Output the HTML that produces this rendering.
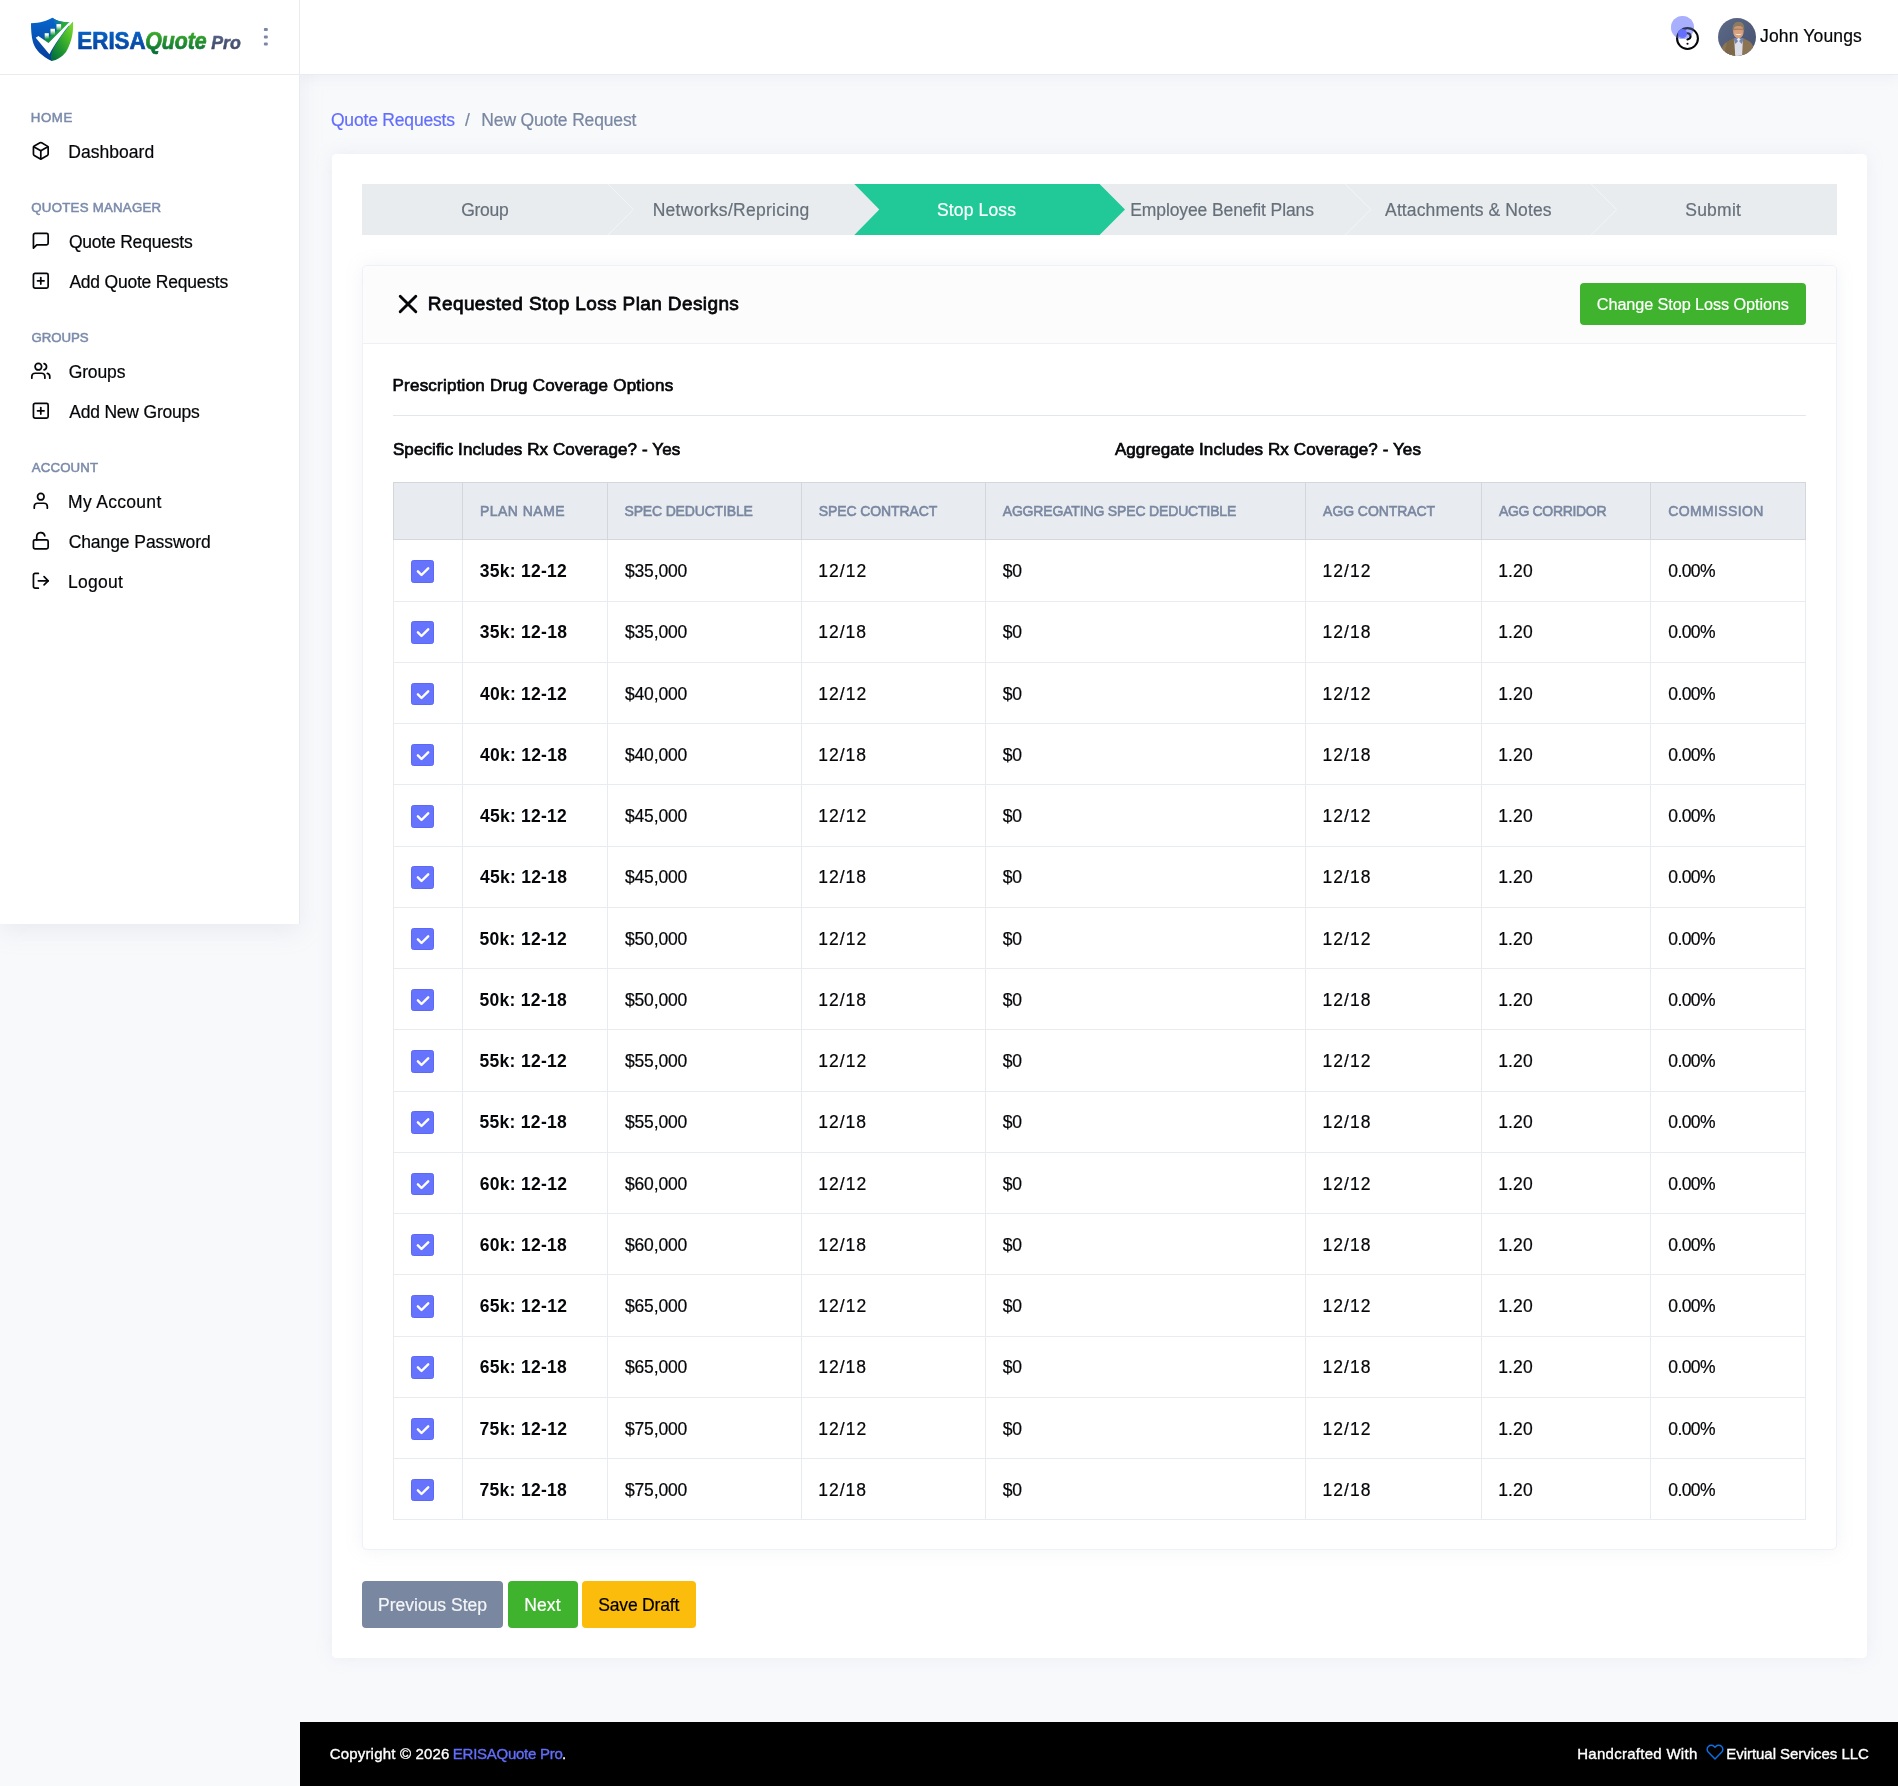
<!DOCTYPE html>
<html lang="en"><head><meta charset="utf-8"><title>ERISAQuote Pro - New Quote Request</title>
<style>
*{box-sizing:border-box}
html,body{margin:0;padding:0}
body{width:1898px;height:1786px;overflow:hidden;background:#f8f9fb;font-family:"Liberation Sans", sans-serif;color:#050609;position:relative}
#app{position:absolute;left:0;top:0;width:1898px;height:1786px;will-change:transform}
.abs,.t,.ic,.ln{position:absolute}
.t{white-space:pre;line-height:1;font-weight:400;-webkit-text-stroke:0.2px currentColor}
.t.b{font-weight:700}
.ic{overflow:visible}
.sidebar{left:0;top:0;width:300px;height:924px;background:#fff;border-right:1px solid #e8ebf1;box-shadow:0 8px 22px rgba(164,172,194,.17)}
.topbar{left:300px;top:0;width:1598px;height:75px;background:#fff;border-bottom:1px solid #e8ebf1;box-shadow:0 4px 12px rgba(176,184,204,.13);clip-path:inset(0 0 -40px 0)}
.logoline{left:0;top:74px;width:299px;height:1px;background:#e8ebf1}
.card{left:332px;top:154px;width:1535px;height:1504px;background:#fff;border-radius:4.5px;box-shadow:0 0 18px rgba(154,163,190,.14)}
.wiz{left:362px;top:184px;width:1475px;height:51px;background:#e9ecef;overflow:hidden}
.inner{left:362px;top:265px;width:1475px;height:1285px;background:#fff;border:1px solid #eff1f6;border-radius:5px;box-shadow:0 0 18px rgba(154,163,190,.13)}
.ihead{left:363px;top:266px;width:1473px;height:78px;background:#fcfcfd;border-bottom:1px solid #eef0f5;border-radius:4px 4px 0 0}
.hr{left:393px;top:415px;width:1413px;height:1px;background:#e3e6ec}
.btn{border-radius:4px}
.thead{left:393px;top:482px;width:1413px;height:58px;background:#e8ebef;border:1px solid #d3d6db}
.ln{background:#e8ecf1}
.ln.h{background:#d3d6db}
.cb{width:23px;height:23px;border-radius:2.5px;background:#6673fd;border:1px solid #5c68fa}
.footer{left:300px;top:1722px;width:1598px;height:64px;background:#000}
</style></head>
<body>
<div id="app">
<aside>
<div class="abs sidebar"></div>
<div class="abs logoline"></div>
<svg class="ic" style="left:0;top:0" width="300" height="74" viewBox="0 0 300 74">
<defs>
<linearGradient id="gb" x1="0" y1="0" x2="0" y2="1"><stop offset="0" stop-color="#0766cc"/><stop offset="1" stop-color="#063c9c"/></linearGradient>
<linearGradient id="gl" x1="0.9" y1="0.1" x2="0.2" y2="1"><stop offset="0" stop-color="#72d62a"/><stop offset="0.55" stop-color="#2aa22e"/><stop offset="1" stop-color="#05703c"/></linearGradient>
<linearGradient id="gv" x1="0" y1="0" x2="1" y2="0"><stop offset="0" stop-color="#0d8a44"/><stop offset="1" stop-color="#2fb23a"/></linearGradient>
<linearGradient id="gt" x1="0" y1="0" x2="1" y2="0"><stop offset="0" stop-color="#0766cc" stop-opacity="1"/><stop offset="1" stop-color="#25a845"/></linearGradient>
<linearGradient id="gw" x1="0" y1="0" x2="0" y2="1"><stop offset="0" stop-color="#fff"/><stop offset="0.25" stop-color="#fff"/><stop offset="1" stop-color="#fff" stop-opacity="0"/></linearGradient>
<linearGradient id="te" x1="0" y1="0" x2="0" y2="1"><stop offset="0" stop-color="#0868cc"/><stop offset="1" stop-color="#073a94"/></linearGradient>
<linearGradient id="tq" x1="0" y1="0" x2="0" y2="1"><stop offset="0" stop-color="#45b828"/><stop offset="1" stop-color="#046a38"/></linearGradient>
<linearGradient id="tp" x1="0" y1="0" x2="0" y2="1"><stop offset="0" stop-color="#5a668a"/><stop offset="1" stop-color="#39425f"/></linearGradient>
</defs>
<path d="M52.3 17.7C47.5 20.6 40 22.9 31 23.2C31 29 31.3 36 33 42.2C35.5 50.5 42 56 51.7 61C60 52 66 40 70 22.6C62 22.6 56.5 20.6 52.3 17.7Z" fill="url(#gb)"/>
<path d="M52.3 17.7C56.5 20.6 62 22.6 69.5 22.6L60 34L52.3 17.7Z" fill="url(#gt)"/>
<path d="M44.7 40.4V33.2H48.8V36.5H50.5V28.8H55V31.5H56.5V24.1H61.1V21.4L69 22.4L48.5 43.1Z" fill="url(#gv)"/>
<rect x="44.7" y="33.2" width="4.1" height="6" fill="url(#gw)"/>
<rect x="50.5" y="28.8" width="4.5" height="6.5" fill="url(#gw)"/>
<rect x="56.5" y="24.1" width="4.6" height="6.5" fill="url(#gw)"/>
<path d="M72.9 21.4C73.6 30 72.6 40 66 52C62 57 57 60 51.7 61C51 58.5 50.8 56.5 51.1 54.3C53 48 59 37.5 72.9 21.4Z" fill="url(#gl)"/>
<path d="M35.7 37.7L38.4 35.9L48.5 43.1L68.9 22.4L72.7 21.3C62 33 54.5 45 49.4 54.2Z" fill="#fff"/>
<text x="77.3" y="49.3" font-family="Liberation Sans, sans-serif" font-weight="700" font-size="23.2" fill="url(#te)" stroke="url(#te)" stroke-width="0.7" textLength="68.4" lengthAdjust="spacingAndGlyphs">ERISA</text>
<text x="145.2" y="49.3" font-family="Liberation Sans, sans-serif" font-weight="700" font-style="italic" font-size="23.6" fill="url(#tq)" stroke="url(#tq)" stroke-width="0.7" textLength="61.5" lengthAdjust="spacingAndGlyphs">Quote</text>
<text x="211.2" y="49.3" font-family="Liberation Sans, sans-serif" font-weight="700" font-style="italic" font-size="18.8" fill="url(#tp)" stroke="url(#tp)" stroke-width="0.5" textLength="29.6" lengthAdjust="spacingAndGlyphs">Pro</text>
<g fill="#7b87a6"><rect x="263.9" y="27.9" width="3.9" height="3" rx="1"/><rect x="263.9" y="35.6" width="3.9" height="3" rx="1"/><rect x="263.9" y="42.6" width="3.9" height="3" rx="1"/></g>
</svg>
<svg class="ic" style="left:31.2px;top:141.2px" width="19.6" height="19.6" viewBox="0 0 24 24" fill="none" stroke="#050609" stroke-width="2.1" stroke-linecap="round" stroke-linejoin="round"><path d="M21 16V8a2 2 0 0 0-1-1.73l-7-4a2 2 0 0 0-2 0l-7 4A2 2 0 0 0 3 8v8a2 2 0 0 0 1 1.73l7 4a2 2 0 0 0 2 0l7-4A2 2 0 0 0 21 16z"/><polyline points="3.27 6.96 12 12.01 20.73 6.96"/><line x1="12" y1="22.08" x2="12" y2="12"/></svg>
<svg class="ic" style="left:31.2px;top:231px" width="19.6" height="19.6" viewBox="0 0 24 24" fill="none" stroke="#050609" stroke-width="2.1" stroke-linecap="round" stroke-linejoin="round"><path d="M21 15a2 2 0 0 1-2 2H7l-4 4V5a2 2 0 0 1 2-2h14a2 2 0 0 1 2 2z"/></svg>
<svg class="ic" style="left:31.2px;top:271.4px" width="19.6" height="19.6" viewBox="0 0 24 24" fill="none" stroke="#050609" stroke-width="2.1" stroke-linecap="round" stroke-linejoin="round"><rect x="3" y="3" width="18" height="18" rx="2" ry="2"/><line x1="12" y1="8" x2="12" y2="16"/><line x1="8" y1="12" x2="16" y2="12"/></svg>
<svg class="ic" style="left:31.2px;top:361px" width="19.6" height="19.6" viewBox="0 0 24 24" fill="none" stroke="#050609" stroke-width="2.1" stroke-linecap="round" stroke-linejoin="round"><path d="M17 21v-2a4 4 0 0 0-4-4H5a4 4 0 0 0-4 4v2"/><circle cx="9" cy="7" r="4"/><path d="M23 21v-2a4 4 0 0 0-3-3.87"/><path d="M16 3.13a4 4 0 0 1 0 7.75"/></svg>
<svg class="ic" style="left:31.2px;top:401.2px" width="19.6" height="19.6" viewBox="0 0 24 24" fill="none" stroke="#050609" stroke-width="2.1" stroke-linecap="round" stroke-linejoin="round"><rect x="3" y="3" width="18" height="18" rx="2" ry="2"/><line x1="12" y1="8" x2="12" y2="16"/><line x1="8" y1="12" x2="16" y2="12"/></svg>
<svg class="ic" style="left:31.2px;top:491.2px" width="19.6" height="19.6" viewBox="0 0 24 24" fill="none" stroke="#050609" stroke-width="2.1" stroke-linecap="round" stroke-linejoin="round"><path d="M20 21v-2a4 4 0 0 0-4-4H8a4 4 0 0 0-4 4v2"/><circle cx="12" cy="7" r="4"/></svg>
<svg class="ic" style="left:31.2px;top:531.2px" width="19.6" height="19.6" viewBox="0 0 24 24" fill="none" stroke="#050609" stroke-width="2.1" stroke-linecap="round" stroke-linejoin="round"><rect x="3" y="11" width="18" height="11" rx="2" ry="2"/><path d="M7 11V7a5 5 0 0 1 9.9-1"/></svg>
<svg class="ic" style="left:31.2px;top:571.2px" width="19.6" height="19.6" viewBox="0 0 24 24" fill="none" stroke="#050609" stroke-width="2.1" stroke-linecap="round" stroke-linejoin="round"><path d="M9 21H5a2 2 0 0 1-2-2V5a2 2 0 0 1 2-2h4"/><polyline points="16 17 21 12 16 7"/><line x1="21" y1="12" x2="9" y2="12"/></svg>
<span class="t" style="left:30.77px;top:111px;font-size:13.25px;-webkit-text-stroke-width:0.53px;letter-spacing:0.61px;color:#7b8bab;">HOME</span>
<span class="t" style="left:31.27px;top:201px;font-size:13.25px;-webkit-text-stroke-width:0.53px;letter-spacing:0.25px;color:#7b8bab;">QUOTES MANAGER</span>
<span class="t" style="left:31.45px;top:331px;font-size:13.25px;-webkit-text-stroke-width:0.53px;letter-spacing:-0.04px;color:#7b8bab;">GROUPS</span>
<span class="t" style="left:31.7px;top:461px;font-size:13.25px;-webkit-text-stroke-width:0.53px;letter-spacing:0.16px;color:#7b8bab;">ACCOUNT</span>
<span class="t" style="left:68.24px;top:144px;font-size:17.5px;letter-spacing:0.04px;">Dashboard</span>
<span class="t" style="left:68.91px;top:234px;font-size:17.5px;letter-spacing:-0.21px;">Quote Requests</span>
<span class="t" style="left:69.41px;top:274px;font-size:17.5px;letter-spacing:-0.22px;">Add Quote Requests</span>
<span class="t" style="left:68.69px;top:364px;font-size:17.5px;letter-spacing:-0.14px;">Groups</span>
<span class="t" style="left:69.21px;top:404px;font-size:17.5px;letter-spacing:-0.2px;">Add New Groups</span>
<span class="t" style="left:68.04px;top:494px;font-size:17.5px;letter-spacing:0.31px;">My Account</span>
<span class="t" style="left:68.65px;top:534px;font-size:17.5px;letter-spacing:-0.07px;">Change Password</span>
<span class="t" style="left:68.04px;top:574px;font-size:17.5px;letter-spacing:0.26px;">Logout</span>
</aside>
<header>
<div class="abs topbar"></div>
<div class="abs" style="left:1671.2px;top:15.8px;width:22.8px;height:22.8px;border-radius:50%;background:rgba(112,122,252,.55)"></div>
<svg class="ic" style="left:1675px;top:25.8px" width="25" height="25" viewBox="0 0 24 24" fill="none" stroke="#050609" stroke-width="2" stroke-linecap="round" stroke-linejoin="round"><circle cx="12" cy="12" r="10"/><path d="M9.09 9a3 3 0 0 1 5.83 1c0 2-3 3-3 3"/><line x1="12" y1="17" x2="12.01" y2="17"/></svg>
<div class="abs" style="left:1671.2px;top:15.8px;width:22.8px;height:22.8px;border-radius:50%;background:rgba(150,158,255,.3)"></div>
<div class="abs" style="left:1677.9px;top:28.9px;width:9px;height:9px;border-radius:50%;background:#6470fb"></div>
<svg class="ic" style="left:1718px;top:18px" width="38" height="38" viewBox="0 0 38 38">
<defs><clipPath id="av"><circle cx="19" cy="19" r="19"/></clipPath>
<linearGradient id="avb" x1="0" y1="0" x2="1" y2="1"><stop offset="0" stop-color="#5d6a88"/><stop offset="1" stop-color="#45516d"/></linearGradient></defs>
<g clip-path="url(#av)">
<rect width="38" height="38" fill="url(#avb)"/>
<path d="M2 38C3.5 29 5.5 25.5 9 24L15.5 20.5L20.5 23L26 20.5L31.5 23.5C34.5 25.5 36 29 37 38Z" fill="#8b7454"/>
<path d="M9 24L15.5 20.5L17.5 38H6Z" fill="#7d6849"/>
<path d="M16.3 21L20.6 19.6L25 21L24 38H17.2Z" fill="#dcdfea"/>
<path d="M15.6 20.6L17.4 26L20.6 22.6L23.8 26L25.8 20.6L20.6 18.6Z" fill="#7584ad"/>
<path d="M18.6 21.4L20.6 23.4L22.6 21.4L20.6 19.4Z" fill="#e6e8f0"/>
<ellipse cx="20.4" cy="13" rx="5.4" ry="7" fill="#cf9672"/>
<ellipse cx="20.4" cy="15.5" rx="4.6" ry="4.6" fill="#d7a17e"/>
<path d="M14.6 12.6C14 6.4 17.2 3.6 20.6 3.7C24.4 3.8 27 6.6 26.2 12.6C25.6 9.6 24 8 20.4 8.1C17 8 15.4 9.6 14.6 12.6Z" fill="#8c7b62"/>
<path d="M15.6 11.3H25.2" stroke="#7d624e" stroke-width="0.6" fill="none"/>
<path d="M17 15.6C18.6 17.9 22.4 17.9 23.9 15.6C22.4 16.3 18.6 16.3 17 15.6Z" fill="#f6efe9"/>
</g></svg>
<span class="t" style="left:1760.12px;top:28px;font-size:17.5px;letter-spacing:0.14px;">John Youngs</span>
</header>
<main>
<div class="abs card"></div>
<div class="abs wiz"></div>
<svg class="ic" style="left:362px;top:184px" width="1475" height="51" viewBox="362 184 1475 51">
<g fill="none" stroke="#f3f5f7" stroke-width="1">
<path d="M607.8 184L633.3 209.5L607.8 235"/><path d="M1345.3 184L1370.8 209.5L1345.3 235"/><path d="M1591.2 184L1616.7 209.5L1591.2 235"/></g>
<path d="M854.3 184H1099.6L1125 209.5L1099.6 235H854.3L879.3 209.5Z" fill="#20c997"/>
</svg>
<div class="abs inner"></div>
<div class="abs ihead"></div>
<svg class="ic" style="left:396px;top:293px" width="24" height="24" viewBox="0 0 24 24" fill="none" stroke="#050609" stroke-width="2.9" stroke-linecap="round"><path d="M4.2 3.2L19.8 18.8M19.8 3.2L4.2 18.8"/></svg>
<div class="abs btn" style="left:1580px;top:283px;width:226px;height:41.5px;background:#3fb32e"></div>
<div class="abs hr"></div>
<div class="abs thead"></div>
<div class="ln h" style="left:462px;top:483px;width:1px;height:56px"></div>
<div class="ln h" style="left:607px;top:483px;width:1px;height:56px"></div>
<div class="ln h" style="left:801px;top:483px;width:1px;height:56px"></div>
<div class="ln h" style="left:985px;top:483px;width:1px;height:56px"></div>
<div class="ln h" style="left:1305px;top:483px;width:1px;height:56px"></div>
<div class="ln h" style="left:1481px;top:483px;width:1px;height:56px"></div>
<div class="ln h" style="left:1650px;top:483px;width:1px;height:56px"></div>
<div class="ln" style="left:393px;top:540px;width:1px;height:980px"></div>
<div class="ln" style="left:462px;top:540px;width:1px;height:980px"></div>
<div class="ln" style="left:607px;top:540px;width:1px;height:980px"></div>
<div class="ln" style="left:801px;top:540px;width:1px;height:980px"></div>
<div class="ln" style="left:985px;top:540px;width:1px;height:980px"></div>
<div class="ln" style="left:1305px;top:540px;width:1px;height:980px"></div>
<div class="ln" style="left:1481px;top:540px;width:1px;height:980px"></div>
<div class="ln" style="left:1650px;top:540px;width:1px;height:980px"></div>
<div class="ln" style="left:1805px;top:540px;width:1px;height:980px"></div>
<div class="ln" style="left:393px;top:601px;width:1413px;height:1px"></div>
<div class="ln" style="left:393px;top:662px;width:1413px;height:1px"></div>
<div class="ln" style="left:393px;top:723px;width:1413px;height:1px"></div>
<div class="ln" style="left:393px;top:784px;width:1413px;height:1px"></div>
<div class="ln" style="left:393px;top:846px;width:1413px;height:1px"></div>
<div class="ln" style="left:393px;top:907px;width:1413px;height:1px"></div>
<div class="ln" style="left:393px;top:968px;width:1413px;height:1px"></div>
<div class="ln" style="left:393px;top:1029px;width:1413px;height:1px"></div>
<div class="ln" style="left:393px;top:1091px;width:1413px;height:1px"></div>
<div class="ln" style="left:393px;top:1152px;width:1413px;height:1px"></div>
<div class="ln" style="left:393px;top:1213px;width:1413px;height:1px"></div>
<div class="ln" style="left:393px;top:1274px;width:1413px;height:1px"></div>
<div class="ln" style="left:393px;top:1336px;width:1413px;height:1px"></div>
<div class="ln" style="left:393px;top:1397px;width:1413px;height:1px"></div>
<div class="ln" style="left:393px;top:1458px;width:1413px;height:1px"></div>
<div class="ln" style="left:393px;top:1519px;width:1413px;height:1px"></div>
<div class="abs cb" style="left:411px;top:560px;height:23px"><svg style="position:absolute;left:-1px;top:-1px" width="23" height="23" viewBox="0 0 23 23" fill="none" stroke="#fff" stroke-width="2.45" stroke-linecap="round" stroke-linejoin="round"><path d="M6.9 11.4L10.5 15L17.2 8.3"/></svg></div>
<span class="t b" style="left:479.68px;top:563px;font-size:17.5px;-webkit-text-stroke-width:0px;letter-spacing:0.28px;">35k: 12-12</span>
<span class="t" style="left:624.94px;top:563px;font-size:17.5px;letter-spacing:-0.14px;">$35,000</span>
<span class="t" style="left:818.22px;top:563px;font-size:17.5px;letter-spacing:1.05px;">12/12</span>
<span class="t" style="left:1002.64px;top:563px;font-size:17.5px;letter-spacing:-0.06px;">$0</span>
<span class="t" style="left:1322.52px;top:563px;font-size:17.5px;letter-spacing:1.05px;">12/12</span>
<span class="t" style="left:1498.22px;top:563px;font-size:17.5px;letter-spacing:0.11px;">1.20</span>
<span class="t" style="left:1668.23px;top:563px;font-size:17.5px;letter-spacing:-0.57px;">0.00%</span>
<div class="abs cb" style="left:411px;top:621px;height:23px"><svg style="position:absolute;left:-1px;top:-1px" width="23" height="23" viewBox="0 0 23 23" fill="none" stroke="#fff" stroke-width="2.45" stroke-linecap="round" stroke-linejoin="round"><path d="M6.9 11.4L10.5 15L17.2 8.3"/></svg></div>
<span class="t b" style="left:479.68px;top:624px;font-size:17.5px;-webkit-text-stroke-width:0px;letter-spacing:0.29px;">35k: 12-18</span>
<span class="t" style="left:624.94px;top:624px;font-size:17.5px;letter-spacing:-0.14px;">$35,000</span>
<span class="t" style="left:818.22px;top:624px;font-size:17.5px;letter-spacing:1.02px;">12/18</span>
<span class="t" style="left:1002.64px;top:624px;font-size:17.5px;letter-spacing:-0.06px;">$0</span>
<span class="t" style="left:1322.52px;top:624px;font-size:17.5px;letter-spacing:1.02px;">12/18</span>
<span class="t" style="left:1498.22px;top:624px;font-size:17.5px;letter-spacing:0.11px;">1.20</span>
<span class="t" style="left:1668.23px;top:624px;font-size:17.5px;letter-spacing:-0.57px;">0.00%</span>
<div class="abs cb" style="left:411px;top:683px;height:22px"><svg style="position:absolute;left:-1px;top:-1.5px" width="23" height="23" viewBox="0 0 23 23" fill="none" stroke="#fff" stroke-width="2.45" stroke-linecap="round" stroke-linejoin="round"><path d="M6.9 11.4L10.5 15L17.2 8.3"/></svg></div>
<span class="t b" style="left:480.02px;top:686px;font-size:17.5px;-webkit-text-stroke-width:0px;letter-spacing:0.24px;">40k: 12-12</span>
<span class="t" style="left:624.94px;top:686px;font-size:17.5px;letter-spacing:-0.14px;">$40,000</span>
<span class="t" style="left:818.22px;top:686px;font-size:17.5px;letter-spacing:1.05px;">12/12</span>
<span class="t" style="left:1002.64px;top:686px;font-size:17.5px;letter-spacing:-0.06px;">$0</span>
<span class="t" style="left:1322.52px;top:686px;font-size:17.5px;letter-spacing:1.05px;">12/12</span>
<span class="t" style="left:1498.22px;top:686px;font-size:17.5px;letter-spacing:0.11px;">1.20</span>
<span class="t" style="left:1668.23px;top:686px;font-size:17.5px;letter-spacing:-0.57px;">0.00%</span>
<div class="abs cb" style="left:411px;top:744px;height:22px"><svg style="position:absolute;left:-1px;top:-1.5px" width="23" height="23" viewBox="0 0 23 23" fill="none" stroke="#fff" stroke-width="2.45" stroke-linecap="round" stroke-linejoin="round"><path d="M6.9 11.4L10.5 15L17.2 8.3"/></svg></div>
<span class="t b" style="left:480.02px;top:747px;font-size:17.5px;-webkit-text-stroke-width:0px;letter-spacing:0.25px;">40k: 12-18</span>
<span class="t" style="left:624.94px;top:747px;font-size:17.5px;letter-spacing:-0.14px;">$40,000</span>
<span class="t" style="left:818.22px;top:747px;font-size:17.5px;letter-spacing:1.02px;">12/18</span>
<span class="t" style="left:1002.64px;top:747px;font-size:17.5px;letter-spacing:-0.06px;">$0</span>
<span class="t" style="left:1322.52px;top:747px;font-size:17.5px;letter-spacing:1.02px;">12/18</span>
<span class="t" style="left:1498.22px;top:747px;font-size:17.5px;letter-spacing:0.11px;">1.20</span>
<span class="t" style="left:1668.23px;top:747px;font-size:17.5px;letter-spacing:-0.57px;">0.00%</span>
<div class="abs cb" style="left:411px;top:805px;height:23px"><svg style="position:absolute;left:-1px;top:-1px" width="23" height="23" viewBox="0 0 23 23" fill="none" stroke="#fff" stroke-width="2.45" stroke-linecap="round" stroke-linejoin="round"><path d="M6.9 11.4L10.5 15L17.2 8.3"/></svg></div>
<span class="t b" style="left:480.02px;top:808px;font-size:17.5px;-webkit-text-stroke-width:0px;letter-spacing:0.24px;">45k: 12-12</span>
<span class="t" style="left:624.94px;top:808px;font-size:17.5px;letter-spacing:-0.14px;">$45,000</span>
<span class="t" style="left:818.22px;top:808px;font-size:17.5px;letter-spacing:1.05px;">12/12</span>
<span class="t" style="left:1002.64px;top:808px;font-size:17.5px;letter-spacing:-0.06px;">$0</span>
<span class="t" style="left:1322.52px;top:808px;font-size:17.5px;letter-spacing:1.05px;">12/12</span>
<span class="t" style="left:1498.22px;top:808px;font-size:17.5px;letter-spacing:0.11px;">1.20</span>
<span class="t" style="left:1668.23px;top:808px;font-size:17.5px;letter-spacing:-0.57px;">0.00%</span>
<div class="abs cb" style="left:411px;top:866px;height:23px"><svg style="position:absolute;left:-1px;top:-1px" width="23" height="23" viewBox="0 0 23 23" fill="none" stroke="#fff" stroke-width="2.45" stroke-linecap="round" stroke-linejoin="round"><path d="M6.9 11.4L10.5 15L17.2 8.3"/></svg></div>
<span class="t b" style="left:480.02px;top:869px;font-size:17.5px;-webkit-text-stroke-width:0px;letter-spacing:0.25px;">45k: 12-18</span>
<span class="t" style="left:624.94px;top:869px;font-size:17.5px;letter-spacing:-0.14px;">$45,000</span>
<span class="t" style="left:818.22px;top:869px;font-size:17.5px;letter-spacing:1.02px;">12/18</span>
<span class="t" style="left:1002.64px;top:869px;font-size:17.5px;letter-spacing:-0.06px;">$0</span>
<span class="t" style="left:1322.52px;top:869px;font-size:17.5px;letter-spacing:1.02px;">12/18</span>
<span class="t" style="left:1498.22px;top:869px;font-size:17.5px;letter-spacing:0.11px;">1.20</span>
<span class="t" style="left:1668.23px;top:869px;font-size:17.5px;letter-spacing:-0.57px;">0.00%</span>
<div class="abs cb" style="left:411px;top:928px;height:22px"><svg style="position:absolute;left:-1px;top:-1.5px" width="23" height="23" viewBox="0 0 23 23" fill="none" stroke="#fff" stroke-width="2.45" stroke-linecap="round" stroke-linejoin="round"><path d="M6.9 11.4L10.5 15L17.2 8.3"/></svg></div>
<span class="t b" style="left:479.5px;top:931px;font-size:17.5px;-webkit-text-stroke-width:0px;letter-spacing:0.3px;">50k: 12-12</span>
<span class="t" style="left:624.94px;top:931px;font-size:17.5px;letter-spacing:-0.14px;">$50,000</span>
<span class="t" style="left:818.22px;top:931px;font-size:17.5px;letter-spacing:1.05px;">12/12</span>
<span class="t" style="left:1002.64px;top:931px;font-size:17.5px;letter-spacing:-0.06px;">$0</span>
<span class="t" style="left:1322.52px;top:931px;font-size:17.5px;letter-spacing:1.05px;">12/12</span>
<span class="t" style="left:1498.22px;top:931px;font-size:17.5px;letter-spacing:0.11px;">1.20</span>
<span class="t" style="left:1668.23px;top:931px;font-size:17.5px;letter-spacing:-0.57px;">0.00%</span>
<div class="abs cb" style="left:411px;top:989px;height:22px"><svg style="position:absolute;left:-1px;top:-1.5px" width="23" height="23" viewBox="0 0 23 23" fill="none" stroke="#fff" stroke-width="2.45" stroke-linecap="round" stroke-linejoin="round"><path d="M6.9 11.4L10.5 15L17.2 8.3"/></svg></div>
<span class="t b" style="left:479.5px;top:992px;font-size:17.5px;-webkit-text-stroke-width:0px;letter-spacing:0.29px;">50k: 12-18</span>
<span class="t" style="left:624.94px;top:992px;font-size:17.5px;letter-spacing:-0.14px;">$50,000</span>
<span class="t" style="left:818.22px;top:992px;font-size:17.5px;letter-spacing:1.02px;">12/18</span>
<span class="t" style="left:1002.64px;top:992px;font-size:17.5px;letter-spacing:-0.06px;">$0</span>
<span class="t" style="left:1322.52px;top:992px;font-size:17.5px;letter-spacing:1.02px;">12/18</span>
<span class="t" style="left:1498.22px;top:992px;font-size:17.5px;letter-spacing:0.11px;">1.20</span>
<span class="t" style="left:1668.23px;top:992px;font-size:17.5px;letter-spacing:-0.57px;">0.00%</span>
<div class="abs cb" style="left:411px;top:1050px;height:23px"><svg style="position:absolute;left:-1px;top:-1px" width="23" height="23" viewBox="0 0 23 23" fill="none" stroke="#fff" stroke-width="2.45" stroke-linecap="round" stroke-linejoin="round"><path d="M6.9 11.4L10.5 15L17.2 8.3"/></svg></div>
<span class="t b" style="left:479.5px;top:1053px;font-size:17.5px;-webkit-text-stroke-width:0px;letter-spacing:0.3px;">55k: 12-12</span>
<span class="t" style="left:624.94px;top:1053px;font-size:17.5px;letter-spacing:-0.14px;">$55,000</span>
<span class="t" style="left:818.22px;top:1053px;font-size:17.5px;letter-spacing:1.05px;">12/12</span>
<span class="t" style="left:1002.64px;top:1053px;font-size:17.5px;letter-spacing:-0.06px;">$0</span>
<span class="t" style="left:1322.52px;top:1053px;font-size:17.5px;letter-spacing:1.05px;">12/12</span>
<span class="t" style="left:1498.22px;top:1053px;font-size:17.5px;letter-spacing:0.11px;">1.20</span>
<span class="t" style="left:1668.23px;top:1053px;font-size:17.5px;letter-spacing:-0.57px;">0.00%</span>
<div class="abs cb" style="left:411px;top:1111px;height:23px"><svg style="position:absolute;left:-1px;top:-1px" width="23" height="23" viewBox="0 0 23 23" fill="none" stroke="#fff" stroke-width="2.45" stroke-linecap="round" stroke-linejoin="round"><path d="M6.9 11.4L10.5 15L17.2 8.3"/></svg></div>
<span class="t b" style="left:479.5px;top:1114px;font-size:17.5px;-webkit-text-stroke-width:0px;letter-spacing:0.29px;">55k: 12-18</span>
<span class="t" style="left:624.94px;top:1114px;font-size:17.5px;letter-spacing:-0.14px;">$55,000</span>
<span class="t" style="left:818.22px;top:1114px;font-size:17.5px;letter-spacing:1.02px;">12/18</span>
<span class="t" style="left:1002.64px;top:1114px;font-size:17.5px;letter-spacing:-0.06px;">$0</span>
<span class="t" style="left:1322.52px;top:1114px;font-size:17.5px;letter-spacing:1.02px;">12/18</span>
<span class="t" style="left:1498.22px;top:1114px;font-size:17.5px;letter-spacing:0.11px;">1.20</span>
<span class="t" style="left:1668.23px;top:1114px;font-size:17.5px;letter-spacing:-0.57px;">0.00%</span>
<div class="abs cb" style="left:411px;top:1173px;height:22px"><svg style="position:absolute;left:-1px;top:-1.5px" width="23" height="23" viewBox="0 0 23 23" fill="none" stroke="#fff" stroke-width="2.45" stroke-linecap="round" stroke-linejoin="round"><path d="M6.9 11.4L10.5 15L17.2 8.3"/></svg></div>
<span class="t b" style="left:479.63px;top:1176px;font-size:17.5px;-webkit-text-stroke-width:0px;letter-spacing:0.3px;">60k: 12-12</span>
<span class="t" style="left:624.94px;top:1176px;font-size:17.5px;letter-spacing:-0.14px;">$60,000</span>
<span class="t" style="left:818.22px;top:1176px;font-size:17.5px;letter-spacing:1.05px;">12/12</span>
<span class="t" style="left:1002.64px;top:1176px;font-size:17.5px;letter-spacing:-0.06px;">$0</span>
<span class="t" style="left:1322.52px;top:1176px;font-size:17.5px;letter-spacing:1.05px;">12/12</span>
<span class="t" style="left:1498.22px;top:1176px;font-size:17.5px;letter-spacing:0.11px;">1.20</span>
<span class="t" style="left:1668.23px;top:1176px;font-size:17.5px;letter-spacing:-0.57px;">0.00%</span>
<div class="abs cb" style="left:411px;top:1234px;height:22px"><svg style="position:absolute;left:-1px;top:-1.5px" width="23" height="23" viewBox="0 0 23 23" fill="none" stroke="#fff" stroke-width="2.45" stroke-linecap="round" stroke-linejoin="round"><path d="M6.9 11.4L10.5 15L17.2 8.3"/></svg></div>
<span class="t b" style="left:479.63px;top:1237px;font-size:17.5px;-webkit-text-stroke-width:0px;letter-spacing:0.28px;">60k: 12-18</span>
<span class="t" style="left:624.94px;top:1237px;font-size:17.5px;letter-spacing:-0.14px;">$60,000</span>
<span class="t" style="left:818.22px;top:1237px;font-size:17.5px;letter-spacing:1.02px;">12/18</span>
<span class="t" style="left:1002.64px;top:1237px;font-size:17.5px;letter-spacing:-0.06px;">$0</span>
<span class="t" style="left:1322.52px;top:1237px;font-size:17.5px;letter-spacing:1.02px;">12/18</span>
<span class="t" style="left:1498.22px;top:1237px;font-size:17.5px;letter-spacing:0.11px;">1.20</span>
<span class="t" style="left:1668.23px;top:1237px;font-size:17.5px;letter-spacing:-0.57px;">0.00%</span>
<div class="abs cb" style="left:411px;top:1295px;height:23px"><svg style="position:absolute;left:-1px;top:-1px" width="23" height="23" viewBox="0 0 23 23" fill="none" stroke="#fff" stroke-width="2.45" stroke-linecap="round" stroke-linejoin="round"><path d="M6.9 11.4L10.5 15L17.2 8.3"/></svg></div>
<span class="t b" style="left:479.63px;top:1298px;font-size:17.5px;-webkit-text-stroke-width:0px;letter-spacing:0.3px;">65k: 12-12</span>
<span class="t" style="left:624.94px;top:1298px;font-size:17.5px;letter-spacing:-0.14px;">$65,000</span>
<span class="t" style="left:818.22px;top:1298px;font-size:17.5px;letter-spacing:1.05px;">12/12</span>
<span class="t" style="left:1002.64px;top:1298px;font-size:17.5px;letter-spacing:-0.06px;">$0</span>
<span class="t" style="left:1322.52px;top:1298px;font-size:17.5px;letter-spacing:1.05px;">12/12</span>
<span class="t" style="left:1498.22px;top:1298px;font-size:17.5px;letter-spacing:0.11px;">1.20</span>
<span class="t" style="left:1668.23px;top:1298px;font-size:17.5px;letter-spacing:-0.57px;">0.00%</span>
<div class="abs cb" style="left:411px;top:1356px;height:23px"><svg style="position:absolute;left:-1px;top:-1px" width="23" height="23" viewBox="0 0 23 23" fill="none" stroke="#fff" stroke-width="2.45" stroke-linecap="round" stroke-linejoin="round"><path d="M6.9 11.4L10.5 15L17.2 8.3"/></svg></div>
<span class="t b" style="left:479.63px;top:1359px;font-size:17.5px;-webkit-text-stroke-width:0px;letter-spacing:0.28px;">65k: 12-18</span>
<span class="t" style="left:624.94px;top:1359px;font-size:17.5px;letter-spacing:-0.14px;">$65,000</span>
<span class="t" style="left:818.22px;top:1359px;font-size:17.5px;letter-spacing:1.02px;">12/18</span>
<span class="t" style="left:1002.64px;top:1359px;font-size:17.5px;letter-spacing:-0.06px;">$0</span>
<span class="t" style="left:1322.52px;top:1359px;font-size:17.5px;letter-spacing:1.02px;">12/18</span>
<span class="t" style="left:1498.22px;top:1359px;font-size:17.5px;letter-spacing:0.11px;">1.20</span>
<span class="t" style="left:1668.23px;top:1359px;font-size:17.5px;letter-spacing:-0.57px;">0.00%</span>
<div class="abs cb" style="left:411px;top:1418px;height:22px"><svg style="position:absolute;left:-1px;top:-1.5px" width="23" height="23" viewBox="0 0 23 23" fill="none" stroke="#fff" stroke-width="2.45" stroke-linecap="round" stroke-linejoin="round"><path d="M6.9 11.4L10.5 15L17.2 8.3"/></svg></div>
<span class="t b" style="left:479.55px;top:1421px;font-size:17.5px;-webkit-text-stroke-width:0px;letter-spacing:0.31px;">75k: 12-12</span>
<span class="t" style="left:624.94px;top:1421px;font-size:17.5px;letter-spacing:-0.14px;">$75,000</span>
<span class="t" style="left:818.22px;top:1421px;font-size:17.5px;letter-spacing:1.05px;">12/12</span>
<span class="t" style="left:1002.64px;top:1421px;font-size:17.5px;letter-spacing:-0.06px;">$0</span>
<span class="t" style="left:1322.52px;top:1421px;font-size:17.5px;letter-spacing:1.05px;">12/12</span>
<span class="t" style="left:1498.22px;top:1421px;font-size:17.5px;letter-spacing:0.11px;">1.20</span>
<span class="t" style="left:1668.23px;top:1421px;font-size:17.5px;letter-spacing:-0.57px;">0.00%</span>
<div class="abs cb" style="left:411px;top:1479px;height:22px"><svg style="position:absolute;left:-1px;top:-1.5px" width="23" height="23" viewBox="0 0 23 23" fill="none" stroke="#fff" stroke-width="2.45" stroke-linecap="round" stroke-linejoin="round"><path d="M6.9 11.4L10.5 15L17.2 8.3"/></svg></div>
<span class="t b" style="left:479.55px;top:1482px;font-size:17.5px;-webkit-text-stroke-width:0px;letter-spacing:0.29px;">75k: 12-18</span>
<span class="t" style="left:624.94px;top:1482px;font-size:17.5px;letter-spacing:-0.14px;">$75,000</span>
<span class="t" style="left:818.22px;top:1482px;font-size:17.5px;letter-spacing:1.02px;">12/18</span>
<span class="t" style="left:1002.64px;top:1482px;font-size:17.5px;letter-spacing:-0.06px;">$0</span>
<span class="t" style="left:1322.52px;top:1482px;font-size:17.5px;letter-spacing:1.02px;">12/18</span>
<span class="t" style="left:1498.22px;top:1482px;font-size:17.5px;letter-spacing:0.11px;">1.20</span>
<span class="t" style="left:1668.23px;top:1482px;font-size:17.5px;letter-spacing:-0.57px;">0.00%</span>
<div class="abs btn" style="left:362px;top:1581px;width:141px;height:47px;background:#7987a1"></div>
<div class="abs btn" style="left:508px;top:1581px;width:70px;height:47px;background:#3fb32e"></div>
<div class="abs btn" style="left:582px;top:1581px;width:114px;height:47px;background:#fbbc0b"></div>
<span class="t" style="left:330.91px;top:112px;font-size:17.5px;letter-spacing:-0.18px;color:#626efb;">Quote Requests</span>
<span class="t" style="left:465.08px;top:112px;font-size:17.5px;color:#7987a1;">/</span>
<span class="t" style="left:481.34px;top:112px;font-size:17.5px;letter-spacing:-0.16px;color:#7987a1;">New Quote Request</span>
<span class="t" style="left:461.19px;top:202px;font-size:17.5px;letter-spacing:-0.29px;color:#66707a;">Group</span>
<span class="t" style="left:652.64px;top:202px;font-size:17.5px;letter-spacing:0.29px;color:#66707a;">Networks/Repricing</span>
<span class="t" style="left:936.91px;top:202px;font-size:17.5px;letter-spacing:0.16px;color:#ffffff;">Stop Loss</span>
<span class="t" style="left:1130.24px;top:202px;font-size:17.5px;letter-spacing:-0.1px;color:#66707a;">Employee Benefit Plans</span>
<span class="t" style="left:1385.11px;top:202px;font-size:17.5px;letter-spacing:0.11px;color:#66707a;">Attachments &amp; Notes</span>
<span class="t" style="left:1685.21px;top:202px;font-size:17.5px;letter-spacing:0.25px;color:#66707a;">Submit</span>
<span class="t" style="left:427.87px;top:294px;font-size:19px;-webkit-text-stroke-width:0.76px;letter-spacing:0.39px;">Requested Stop Loss Plan Designs</span>
<span class="t" style="left:1596.81px;top:296px;font-size:16.25px;letter-spacing:-0.09px;color:#ffffff;">Change Stop Loss Options</span>
<span class="t" style="left:392.49px;top:377px;font-size:17px;-webkit-text-stroke-width:0.68px;letter-spacing:0.23px;">Prescription Drug Coverage Options</span>
<span class="t" style="left:392.88px;top:441px;font-size:17px;-webkit-text-stroke-width:0.68px;letter-spacing:0.11px;">Specific Includes Rx Coverage? - Yes</span>
<span class="t" style="left:1114.88px;top:441px;font-size:17px;-webkit-text-stroke-width:0.68px;letter-spacing:0.1px;">Aggregate Includes Rx Coverage? - Yes</span>
<span class="t" style="left:479.93px;top:504px;font-size:14px;-webkit-text-stroke-width:0.56px;letter-spacing:0.48px;color:#7987a1;">PLAN NAME</span>
<span class="t" style="left:624.52px;top:504px;font-size:14px;-webkit-text-stroke-width:0.56px;letter-spacing:-0.17px;color:#7987a1;">SPEC DEDUCTIBLE</span>
<span class="t" style="left:818.72px;top:504px;font-size:14px;-webkit-text-stroke-width:0.56px;letter-spacing:-0.11px;color:#7987a1;">SPEC CONTRACT</span>
<span class="t" style="left:1002.71px;top:504px;font-size:14px;-webkit-text-stroke-width:0.56px;letter-spacing:-0.16px;color:#7987a1;">AGGREGATING SPEC DEDUCTIBLE</span>
<span class="t" style="left:1323.11px;top:504px;font-size:14px;-webkit-text-stroke-width:0.56px;letter-spacing:-0.07px;color:#7987a1;">AGG CONTRACT</span>
<span class="t" style="left:1498.91px;top:504px;font-size:14px;-webkit-text-stroke-width:0.56px;letter-spacing:-0.33px;color:#7987a1;">AGG CORRIDOR</span>
<span class="t" style="left:1668.13px;top:504px;font-size:14px;-webkit-text-stroke-width:0.56px;letter-spacing:0.39px;color:#7987a1;">COMMISSION</span>
<span class="t" style="left:378.04px;top:1597px;font-size:17.5px;letter-spacing:0px;color:#f4f5f8;">Previous Step</span>
<span class="t" style="left:524.14px;top:1597px;font-size:17.5px;letter-spacing:0.16px;color:#ffffff;">Next</span>
<span class="t" style="left:598.31px;top:1597px;font-size:17.5px;letter-spacing:-0.19px;color:#000000;">Save Draft</span>
</main>
<footer>
<div class="abs footer"></div>
<svg class="ic" style="left:1705.6px;top:1743.2px" width="18" height="18" viewBox="0 0 24 24" fill="none" stroke="#0f6fe0" stroke-width="2" stroke-linecap="round" stroke-linejoin="round"><path d="M20.84 4.61a5.5 5.5 0 0 0-7.78 0L12 5.67l-1.06-1.06a5.5 5.5 0 0 0-7.78 7.78l1.06 1.06L12 21.23l7.78-7.78 1.06-1.06a5.5 5.5 0 0 0 0-7.78z"/></svg>
<span class="t" style="left:329.66px;top:1746px;font-size:15px;-webkit-text-stroke-width:0.35px;letter-spacing:0.19px;color:#ffffff;">Copyright © 2026 </span>
<span class="t" style="left:452.87px;top:1746px;font-size:15px;-webkit-text-stroke-width:0.35px;letter-spacing:-0.27px;color:#626efb;">ERISAQuote Pro</span>
<span class="t" style="left:562.09px;top:1746px;font-size:15px;-webkit-text-stroke-width:0.35px;color:#ffffff;">.</span>
<span class="t" style="left:1577.17px;top:1746px;font-size:15px;-webkit-text-stroke-width:0.35px;letter-spacing:0.28px;color:#ffffff;">Handcrafted With</span>
<span class="t" style="left:1726.27px;top:1746px;font-size:15px;-webkit-text-stroke-width:0.35px;letter-spacing:-0.04px;color:#ffffff;">Evirtual Services LLC</span>
</footer>
</div>
</body></html>
